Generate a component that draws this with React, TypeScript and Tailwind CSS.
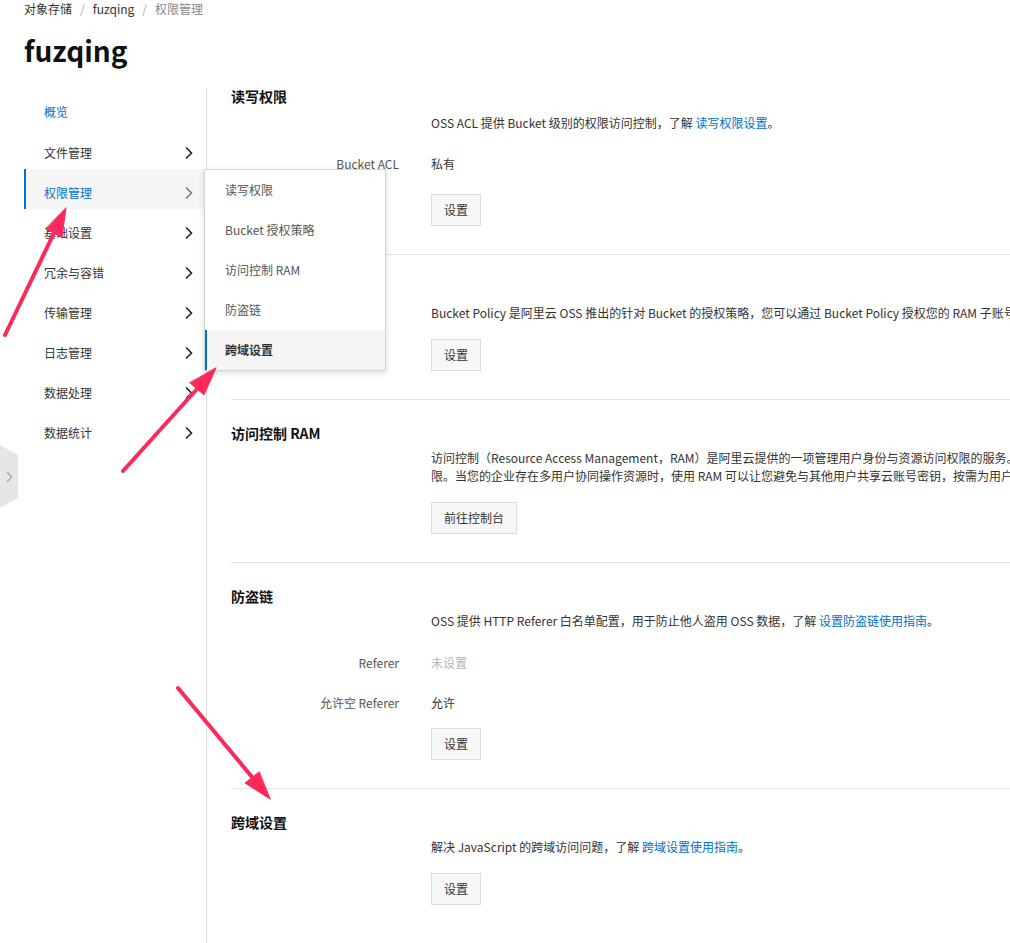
import React from 'react';

const FONT = { fontFamily: '"Noto Sans CJK SC", "Noto Sans", sans-serif' };

const navItems = [
  { label: '文件管理' },
  { label: '权限管理', active: true },
  { label: '基础设置' },
  { label: '冗余与容错' },
  { label: '传输管理' },
  { label: '日志管理' },
  { label: '数据处理' },
  { label: '数据统计' },
];

const menuItems = ['读写权限', 'Bucket 授权策略', '访问控制 RAM', '防盗链', '跨域设置'];

function Chevron({ light }: { light?: boolean }) {
  return (
    <svg width="8" height="14" viewBox="0 0 8 14" className="shrink-0">
      <path d="M1 1.5 L6.5 7 L1 12.5" fill="none" stroke={light ? '#777' : '#222'} strokeWidth="1.6" />
    </svg>
  );
}

function Btn({ children }: { children: React.ReactNode }) {
  return (
    <button className="h-8 border border-[#dcdcdc] bg-[#f7f7f7] px-3 text-[12px] text-[#333]">
      {children}
    </button>
  );
}

function Row({ label, children }: { label: string; children: React.ReactNode }) {
  return (
    <div className="flex h-10 items-center">
      <div className="w-[200px] pr-[32px] text-right text-[#555]">{label}</div>
      <div>{children}</div>
    </div>
  );
}

function Heading({ children }: { children: React.ReactNode }) {
  return <h2 className="text-[14px] leading-[20px] font-bold text-[#111]">{children}</h2>;
}

function Desc({ children, first }: { children: React.ReactNode; first?: boolean }) {
  return (
    <p className={`${first ? 'mt-[8px]' : 'mt-[6px]'} whitespace-nowrap pl-[200px] leading-[18px] text-[#333]`}>
      {children}
    </p>
  );
}

const Link = ({ children }: { children: React.ReactNode }) => (
  <span className="text-[#0070cc]">{children}</span>
);

// red annotation arrows drawn over the page
function Arrows() {
  return (
    <svg className="pointer-events-none absolute left-0 top-0" width="1010" height="943">
      <g stroke="#fb2a5a" strokeWidth="4" strokeLinecap="round" fill="#fb2a5a">
        <line x1="5" y1="335" x2="54" y2="233" />
        <polygon points="66,208 62,237 46,229" strokeWidth="1" />
        <line x1="123" y1="471" x2="197" y2="389" />
        <polygon points="216,368 204,395 190,383" strokeWidth="1" />
        <line x1="178" y1="688" x2="252" y2="777" />
        <polygon points="270,799 245,783 259,772" strokeWidth="1" />
      </g>
    </svg>
  );
}

export default function App() {
  return (
    <div className="relative h-[943px] overflow-hidden bg-white text-[12px]" style={FONT}>
      {/* Header */}
      <div className="px-6">
        <div className="flex items-center gap-[8px] leading-[18px] text-[#333]">
          <span>对象存储</span>
          <span className="text-[#aaa]">/</span>
          <span>fuzqing</span>
          <span className="text-[#aaa]">/</span>
          <span className="text-[#888]">权限管理</span>
        </div>
        <h1 className="mt-[12px] text-[28px] leading-[40px] font-bold text-[#111]">fuzqing</h1>
      </div>

      <div className="mt-[18px] flex pl-6">
        {/* Sidebar */}
        <div className="h-[900px] w-[183px] shrink-0 border-r border-[#dedede]">
          <div className="flex h-[41px] items-center pl-5 pt-[6px] text-[#0070cc]">概览</div>
          {navItems.map(item => (
            <div
              key={item.label}
              className={`flex h-10 items-center justify-between pr-[13px] pt-[7px] ${
                item.active
                  ? 'border-l-2 border-[#0070cc] bg-[#f5f5f5] pl-[18px] text-[#0070cc]'
                  : 'pl-5 text-[#333]'
              }`}
            >
              <span>{item.label}</span>
              <Chevron light={item.active} />
            </div>
          ))}
        </div>

        {/* Main */}
        <div className="min-w-0 flex-1 pl-6">
          {/* 读写权限 */}
          <section className="-mt-[2px] pb-[28px]">
            <Heading>读写权限</Heading>
            <Desc first>
              OSS ACL 提供 Bucket 级别的权限访问控制，了解 <Link>读写权限设置</Link>。
            </Desc>
            <div className="mt-[12px]">
              <Row label="Bucket ACL">
                <span className="text-[#333]">私有</span>
              </Row>
            </div>
            <div className="mt-[10px] pl-[200px]">
              <Btn>设置</Btn>
            </div>
          </section>

          {/* Bucket 授权策略 */}
          <section className="border-t border-[#e3e3e3] pt-[23px] pb-[28px]">
            <Heading>Bucket 授权策略</Heading>
            <Desc>
              Bucket Policy 是阿里云 OSS 推出的针对 Bucket 的授权策略，您可以通过 Bucket Policy 授权您的 RAM 子账号或其他账号访问您的 OSS 资源。
            </Desc>
            <div className="mt-[17px] pl-[200px]">
              <Btn>设置</Btn>
            </div>
          </section>

          {/* 访问控制 RAM */}
          <section className="border-t border-[#e3e3e3] pt-[23px] pb-[28px]">
            <Heading>访问控制 RAM</Heading>
            <Desc>
              访问控制（Resource Access Management，RAM）是阿里云提供的一项管理用户身份与资源访问权限的服务。使用 RAM，您可以创建、管理用户账号，并可以控制这些用户账号对您名下资源具有的操作权
            </Desc>
            <p className="whitespace-nowrap pl-[200px] leading-[18px] text-[#333]">
              限。当您的企业存在多用户协同操作资源时，使用 RAM 可以让您避免与其他用户共享云账号密钥，按需为用户分配最小权限，从而降低您的企业信息安全风险。
            </p>
            <div className="mt-[17px] pl-[200px]">
              <Btn>前往控制台</Btn>
            </div>
          </section>

          {/* 防盗链 */}
          <section className="border-t border-[#e3e3e3] pt-[23px] pb-[28px]">
            <Heading>防盗链</Heading>
            <Desc>
              OSS 提供 HTTP Referer 白名单配置，用于防止他人盗用 OSS 数据，了解 <Link>设置防盗链使用指南</Link>。
            </Desc>
            <div className="mt-[13px]">
              <Row label="Referer">
                <span className="text-[#b3b3b3]">未设置</span>
              </Row>
              <Row label="允许空 Referer">
                <span className="text-[#333]">允许</span>
              </Row>
            </div>
            <div className="mt-[5px] pl-[200px]">
              <Btn>设置</Btn>
            </div>
          </section>

          {/* 跨域设置 */}
          <section className="border-t border-[#e3e3e3] pt-[23px] pb-[28px]">
            <Heading>跨域设置</Heading>
            <Desc>
              解决 JavaScript 的跨域访问问题，了解 <Link>跨域设置使用指南</Link>。
            </Desc>
            <div className="mt-[17px] pl-[200px]">
              <Btn>设置</Btn>
            </div>
          </section>
        </div>
      </div>

      {/* Submenu flyout */}
      <div className="absolute left-[204px] top-[169px] w-[182px] border border-[#d4d4d4] bg-white shadow-[0_2px_6px_rgba(0,0,0,0.15)]">
        {menuItems.map((m, i) => {
          const active = i === menuItems.length - 1;
          return (
            <div
              key={m}
              className={`flex h-10 items-center ${
                active
                  ? 'border-l-2 border-[#0070cc] bg-[#f5f5f5] pl-[18px] font-bold text-[#333]'
                  : 'pl-5 text-[#555]'
              }`}
            >
              {m}
            </div>
          );
        })}
      </div>

      {/* Collapse handle */}
      <div className="absolute left-0 top-[445px] flex h-[63px] w-[18px] items-center justify-center bg-[#e6e6e6] [clip-path:polygon(0_0,100%_16%,100%_84%,0_100%)]">
        <svg width="7" height="12" viewBox="0 0 7 12">
          <path d="M1 1 L5.5 6 L1 11" fill="none" stroke="#aaa" strokeWidth="1.4" />
        </svg>
      </div>

      <Arrows />
    </div>
  );
}
